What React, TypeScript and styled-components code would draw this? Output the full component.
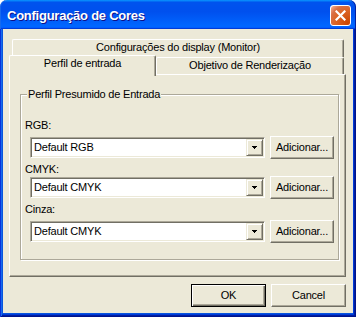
import React from "react";
import styled, { createGlobalStyle } from "styled-components";

const face = "#ECE9D8";
const shadow = "#ACA899";
const darkShadow = "#716F64";

const GlobalStyle = createGlobalStyle`
  * { box-sizing: border-box; }
  html, body { margin: 0; padding: 0; background: #ffffff; }
  body { font-family: "Liberation Sans", Arial, sans-serif; }
`;

const Window = styled.div`
  width: 356px;
  height: 317px;
  display: flex;
  flex-direction: column;
`;

const TitleBar = styled.div`
  flex: none;
  height: 29px;
  display: flex;
  align-items: flex-start;
  padding: 0 5px 0 7px;
  border-radius: 7px 7px 0 0;
  background: linear-gradient(
    180deg,
    #0997ff,
    #0053ee 8%,
    #0050ee 40%,
    #0066ff 88%,
    #0066ff 93%,
    #005bff 95%,
    #003dd7 96%,
    #003dd7
  );
  box-shadow: inset 1px 0 #166aee, inset -1px 0 #001ea0;
`;

const Title = styled.span`
  margin-top: 8px;
  font: bold 13px/15px "Liberation Sans", Arial, sans-serif;
  letter-spacing: -0.25px;
  color: #ffffff;
  text-shadow: 1px 1px #0f1089;
  white-space: nowrap;
`;

const CloseButton = styled.button`
  margin: 5px 0 0 auto;
  width: 21px;
  height: 21px;
  padding: 0;
  display: flex;
  align-items: center;
  justify-content: center;
  border: 1px solid #ffffff;
  border-radius: 3px;
  background: radial-gradient(
    circle at 90% 90%,
    #cc4600 0%,
    #dc6527 55%,
    #d86f45 75%,
    #f0a080 92%,
    #ffffff 100%
  );
`;

const Frame = styled.div`
  flex: 1;
  display: flex;
  padding: 0 3px 4px 3px;
  background: #0855dd;
  box-shadow: inset 1px 0 #0831d9, inset -1px -1px #00138c, inset 2px 0 #166aee,
    inset -2px -2px #001ea0, inset -3px -3px #003bda;
`;

const Client = styled.div`
  flex: 1;
  display: flex;
  flex-direction: column;
  padding: 10px 7px 6px 6px;
  background: ${face};
  color: #000000;
  font-size: 11px;
  line-height: 13px;
  letter-spacing: -0.2px;
`;

const TabControl = styled.div`
  flex: 1;
  display: flex;
  flex-direction: column;
`;

const TabRow = styled.div<{ $height: number; $inset: number }>`
  flex: none;
  display: flex;
  height: ${({ $height }) => $height}px;
  padding: 0 2px 0 ${({ $inset }) => $inset}px;
`;

const Tab = styled.div<{ $width: number; $active?: boolean }>`
  position: relative;
  z-index: ${({ $active }) => ($active ? 1 : 0)};
  width: ${({ $width }) => $width}px;
  height: ${({ $active }) => ($active ? "calc(100% + 4px)" : "100%")};
  margin-top: ${({ $active }) => ($active ? "-2px" : "0")};
  padding-top: 1px;
  border-top: 1px solid #ffffff;
  border-left: 1px solid #ffffff;
  border-right: 1px solid ${darkShadow};
  border-radius: 2px 2px 0 0;
  box-shadow: inset -1px 0 ${shadow};
  background: ${face};
  text-align: center;
  white-space: nowrap;
`;

const Panel = styled.div`
  flex: 1;
  padding: 19px 6px 0 10px;
  border: 1px solid;
  border-color: #ffffff ${darkShadow} ${darkShadow} #ffffff;
  box-shadow: inset -1px -1px ${shadow};
`;

const Group = styled.div`
  position: relative;
  padding: 24px 0 16px 4px;
  border: 1px solid ${shadow};
  box-shadow: inset 1px 1px #ffffff, 1px 1px #ffffff;
`;

const Legend = styled.span`
  position: absolute;
  top: -7px;
  left: 6px;
  padding: 0 1px;
  background: ${face};
  white-space: nowrap;
`;

const FieldLabel = styled.div<{ $gap: number }>`
  margin-top: ${({ $gap }) => $gap}px;
  height: 13px;
`;

const FieldRow = styled.div<{ $gap: number }>`
  display: flex;
  align-items: center;
  height: 23px;
  margin-top: ${({ $gap }) => $gap}px;
  padding-left: 5px;
`;

const Combo = styled.div`
  width: 235px;
  height: 21px;
  display: flex;
  padding: 1px;
  background: #ffffff;
  border: 1px solid;
  border-color: ${shadow} #ffffff #ffffff ${shadow};
  box-shadow: inset 1px 1px ${darkShadow}, inset -1px -1px ${face};
`;

const ComboText = styled.div`
  flex: 1;
  padding: 2px 0 0 2px;
  white-space: nowrap;
`;

const DropButton = styled.div`
  width: 17px;
  height: 17px;
  display: flex;
  align-items: center;
  justify-content: center;
  background: ${face};
  border: 1px solid;
  border-color: ${face} ${darkShadow} ${darkShadow} ${face};
  box-shadow: inset 1px 1px #ffffff, inset -1px -1px ${shadow};
`;

const PushButton = styled.button<{ $width: number; $default?: boolean }>`
  flex: none;
  width: ${({ $width }) => $width}px;
  height: 23px;
  margin-left: 5px;
  padding: 0;
  font: inherit;
  letter-spacing: inherit;
  color: #000000;
  background: ${face};
  border: 1px solid;
  border-color: ${({ $default }) =>
    $default ? "#000000" : `#ffffff ${darkShadow} ${darkShadow} #ffffff`};
  box-shadow: ${({ $default }) =>
    $default
      ? `inset 1px 1px #ffffff, inset -1px -1px ${darkShadow}, inset -2px -2px ${shadow}`
      : `inset -1px -1px ${shadow}`};
`;

const ButtonBar = styled.div`
  flex: none;
  display: flex;
  justify-content: flex-end;
  margin-top: 7px;
`;

const CloseIcon = () => (
  <svg width="11" height="11" viewBox="0 0 11 11">
    <path d="M1.5 1.5 L9.5 9.5 M9.5 1.5 L1.5 9.5" stroke="#ffffff" strokeWidth="2.2" strokeLinecap="square" />
  </svg>
);

const ArrowIcon = () => (
  <svg width="5" height="3" viewBox="0 0 5 3" shapeRendering="crispEdges">
    <rect x="0" y="0" width="5" height="1" fill="#000" />
    <rect x="1" y="1" width="3" height="1" fill="#000" />
    <rect x="2" y="2" width="1" height="1" fill="#000" />
  </svg>
);

const fields = [
  { label: "RGB:", value: "Default RGB", labelGap: 0, rowGap: 4 },
  { label: "CMYK:", value: "Default CMYK", labelGap: 4, rowGap: 0 },
  { label: "Cinza:", value: "Default CMYK", labelGap: 4, rowGap: 4 },
];

export default function App() {
  return (
    <>
      <GlobalStyle />
      <Window>
        <TitleBar>
          <Title>Configuração de Cores</Title>
          <CloseButton aria-label="Fechar">
            <CloseIcon />
          </CloseButton>
        </TitleBar>
        <Frame>
          <Client>
            <TabControl>
              <TabRow $height={18} $inset={3}>
                <Tab $width={332}>Configurações do display (Monitor)</Tab>
              </TabRow>
              <TabRow $height={17} $inset={0}>
                <Tab $width={147} $active>
                  Perfil de entrada
                </Tab>
                <Tab $width={188}>Objetivo de Renderização</Tab>
              </TabRow>
              <Panel>
                <Group>
                  <Legend>Perfil Presumido de Entrada</Legend>
                  {fields.map((f) => (
                    <React.Fragment key={f.label}>
                      <FieldLabel $gap={f.labelGap}>{f.label}</FieldLabel>
                      <FieldRow $gap={f.rowGap}>
                        <Combo>
                          <ComboText>{f.value}</ComboText>
                          <DropButton>
                            <ArrowIcon />
                          </DropButton>
                        </Combo>
                        <PushButton $width={64}>Adicionar...</PushButton>
                      </FieldRow>
                    </React.Fragment>
                  ))}
                </Group>
              </Panel>
            </TabControl>
            <ButtonBar>
              <PushButton $width={75} $default>
                OK
              </PushButton>
              <PushButton $width={75}>Cancel</PushButton>
            </ButtonBar>
          </Client>
        </Frame>
      </Window>
    </>
  );
}
